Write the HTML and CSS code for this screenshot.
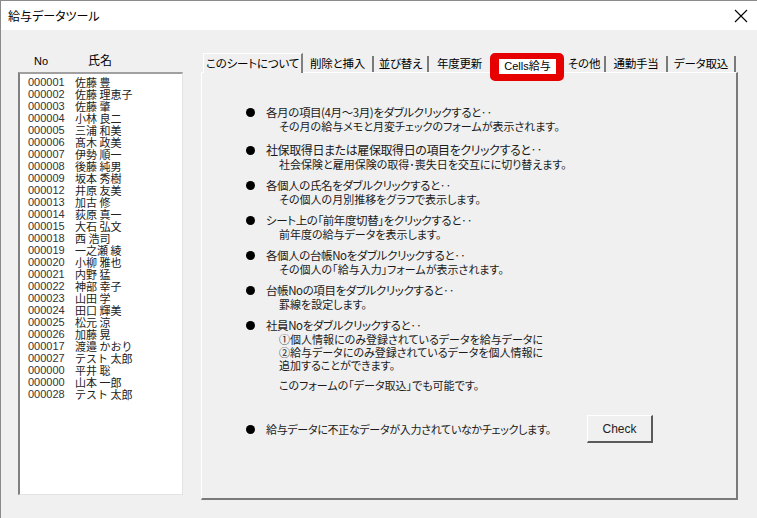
FILE: index.html
```html
<!DOCTYPE html>
<html lang="ja">
<head>
    <meta charset="UTF-8">
    <title>給与データツール</title>
    <link rel="stylesheet" href="styles.css">
</head>
<body>
<div id="window">
    <div class="titleBar">
        <span class="titleText">給与データツール</span>
        <svg class="closeIcon" width="14" height="14" viewBox="0 0 14 14">
            <path d="M1 1 L13 13 M13 1 L1 13" stroke="#000" stroke-width="1.1" fill="none"/>
        </svg>
    </div>

    <div class="mainArea">
        <div class="leftSide">
            <div class="listHead">
                <span class="colNo">No</span>
                <span class="colName">氏名</span>
            </div>
            <div class="listBox">
                <div class="row"><span class="num">000001</span><span class="name">佐藤 豊</span></div>
                <div class="row"><span class="num">000002</span><span class="name">佐藤 理恵子</span></div>
                <div class="row"><span class="num">000003</span><span class="name">佐藤 肇</span></div>
                <div class="row"><span class="num">000004</span><span class="name">小林 良二</span></div>
                <div class="row"><span class="num">000005</span><span class="name">三浦 和美</span></div>
                <div class="row"><span class="num">000006</span><span class="name">髙木 政美</span></div>
                <div class="row"><span class="num">000007</span><span class="name">伊勢 順一</span></div>
                <div class="row"><span class="num">000008</span><span class="name">後藤 純男</span></div>
                <div class="row"><span class="num">000009</span><span class="name">坂本 秀樹</span></div>
                <div class="row"><span class="num">000012</span><span class="name">井原 友美</span></div>
                <div class="row"><span class="num">000013</span><span class="name">加古 修</span></div>
                <div class="row"><span class="num">000014</span><span class="name">荻原 真一</span></div>
                <div class="row"><span class="num">000015</span><span class="name">大石 弘文</span></div>
                <div class="row"><span class="num">000018</span><span class="name">西 浩司</span></div>
                <div class="row"><span class="num">000019</span><span class="name">一之瀬 綾</span></div>
                <div class="row"><span class="num">000020</span><span class="name">小柳 雅也</span></div>
                <div class="row"><span class="num">000021</span><span class="name">内野 猛</span></div>
                <div class="row"><span class="num">000022</span><span class="name">神部 幸子</span></div>
                <div class="row"><span class="num">000023</span><span class="name">山田 学</span></div>
                <div class="row"><span class="num">000024</span><span class="name">田口 輝美</span></div>
                <div class="row"><span class="num">000025</span><span class="name">松元 涼</span></div>
                <div class="row"><span class="num">000026</span><span class="name">加藤 晃</span></div>
                <div class="row"><span class="num">000017</span><span class="name">渡邉 かおり</span></div>
                <div class="row"><span class="num">000027</span><span class="name">テスト 太郎</span></div>
                <div class="row"><span class="num">000000</span><span class="name">平井 聡</span></div>
                <div class="row"><span class="num">000000</span><span class="name">山本 一郎</span></div>
                <div class="row"><span class="num">000028</span><span class="name">テスト 太郎</span></div>
            </div>
        </div>

        <div class="rightSide">
            <div class="tabStrip">
                <div class="tab active">このシートについて</div>
                <div class="tab t2">削除と挿入</div>
                <div class="tab t3">並び替え</div>
                <div class="tab t4">年度更新</div>
                <div class="tab marked"><span class="markedLabel">Cells給与</span></div>
                <div class="tab t6">その他</div>
                <div class="tab t7">通勤手当</div>
                <div class="tab t8">データ取込</div>
            </div>
            <div class="panel">
                <div class="item">
                    <div class="head"><span class="dot"></span>各月の項目(4月～3月)をダブルクリックすると‥</div>
                    <div class="sub">その月の給与メモと月変チェックのフォームが表示されます。</div>
                </div>
                <div class="item big">
                    <div class="head"><span class="dot"></span>社保取得日または雇保取得日の項目をクリックすると‥</div>
                    <div class="sub">社会保険と雇用保険の取得･喪失日を交互にに切り替えます。</div>
                </div>
                <div class="item">
                    <div class="head"><span class="dot"></span>各個人の氏名をダブルクリックすると‥</div>
                    <div class="sub">その個人の月別推移をグラフで表示します。</div>
                </div>
                <div class="item">
                    <div class="head"><span class="dot"></span>シート上の「前年度切替」をクリックすると‥</div>
                    <div class="sub">前年度の給与データを表示します。</div>
                </div>
                <div class="item">
                    <div class="head"><span class="dot"></span>各個人の台帳Noをダブルクリックすると‥</div>
                    <div class="sub">その個人の「給与入力」フォームが表示されます。</div>
                </div>
                <div class="item">
                    <div class="head"><span class="dot"></span>台帳Noの項目をダブルクリックすると‥</div>
                    <div class="sub">罫線を設定します。</div>
                </div>
                <div class="item">
                    <div class="head"><span class="dot"></span>社員Noをダブルクリックすると‥</div>
                    <div class="sub">①個人情報にのみ登録されているデータを給与データに</div>
                    <div class="sub">②給与データにのみ登録されているデータを個人情報に</div>
                    <div class="sub">追加することができます。</div>
                    <div class="sub gapTop">このフォームの「データ取込」でも可能です。</div>
                </div>
                <div class="checkRow">
                    <div class="checkText"><span class="dot"></span>給与データに不正なデータが入力されていなかチェックします。</div>
                    <button class="checkBtn">Check</button>
                </div>
            </div>
        </div>
    </div>
</div>
</body>
</html>
```

FILE: styles.css
```css
body{
    margin: 0;
    background-color: #f0f0f0;
    font-family: "Noto Sans CJK JP", "Liberation Sans", sans-serif;
    color: #000;
}
#window{
    width: 756px;
    height: 517px;
    border-left: 1px solid #8a8a8a;
    border-top: 1px solid #8a8a8a;
    background-color: #f0f0f0;
    overflow: hidden;
}
.titleBar{
    height: 29px;
    background-color: #fff;
    display: flex;
    align-items: center;
    justify-content: space-between;
    padding: 0 8px 0 7px;
}
.titleText{
    font-size: 12px;
    font-feature-settings: "palt";
}
.closeIcon{
    margin-right: 1px;
}
.mainArea{
    display: flex;
    padding-top: 23px;
}
.leftSide{
    margin-left: 17px;
    width: 165px;
}
.listHead{
    height: 19px;
    font-size: 12px;
    display: flex;
}
.colNo{
    font-family: "Liberation Sans", sans-serif;
    font-size: 11px;
    margin-left: 16px;
    margin-top: 2px;
}
.colName{
    margin-left: 40px;
    line-height: 14px;
}
.listBox{
    background-color: #fff;
    border-left: 2px solid #808080;
    border-top: 2px solid #a0a0a0;
    border-right: 1px solid #e3e3e3;
    border-bottom: 1px solid #e3e3e3;
    padding: 2px 0 0 8px;
    box-sizing: border-box;
    height: 423px;
    color: #222;
}
.row{
    height: 12px;
    line-height: 12px;
    white-space: nowrap;
    display: flex;
    align-items: center;
}
.num{
    width: 47px;
    font-family: "Liberation Sans", sans-serif;
    font-size: 11px;
    color: #333;
}
.name{
    font-size: 11px;
}
.rightSide{
    margin-left: 18px;
    width: 537px;
}
.tabStrip{
    display: flex;
    align-items: flex-end;
    height: 19px;
    padding-left: 2px;
    font-size: 11.5px;
    font-feature-settings: "palt";
    letter-spacing: -0.2px;
}
.tab{
    height: 16px;
    line-height: 15px;
    text-align: center;
    box-sizing: border-box;
    border-right: 2px solid #7a7a7a;
    white-space: nowrap;
}
.tab.active{
    width: 100px;
    height: 20px;
    line-height: 19px;
    background-color: #f0f0f0;
    border-left: 1px solid #fff;
    border-top: 1px solid #fff;
    border-right: 2px solid #808080;
    margin-bottom: -1px;
    position: relative;
    z-index: 1;
}
.t2{ width: 71px; }
.t3{ width: 55px; }
.t4{ width: 61px; border-right: none; }
.t6{ width: 42px; }
.t7{ width: 62px; }
.t8{ width: 68px; }
.tab.marked{
    width: 74px;
    height: 28px;
    border: 5px solid #e60000;
    border-radius: 5px;
    background-color: #e60000;
    margin-bottom: -9px;
    padding: 0;
    position: relative;
    z-index: 2;
}
.markedLabel{
    display: block;
    background-color: #fff;
    margin: 1px 3px 0 4px;
    height: 15px;
    line-height: 15px;
    font-family: "Liberation Sans", "Noto Sans CJK JP", sans-serif;
    font-size: 11px;
    letter-spacing: 0;
}
.panel{
    height: 428px;
    box-sizing: border-box;
    border-left: 1px solid #fff;
    border-top: 1px solid #fff;
    border-right: 2px solid #7a7a7a;
    border-bottom: 2px solid #7a7a7a;
    padding: 31px 0 0 44px;
    color: #1a1a1a;
}
.item{
    margin-bottom: 6px;
    font-feature-settings: "palt";
}
.item.big{
    margin-top: 9px;
}
.head{
    font-size: 11.5px;
    line-height: 16px;
    letter-spacing: -0.4px;
    display: flex;
    align-items: center;
    white-space: nowrap;
}
.item.big .head{
    font-size: 12px;
}
.dot{
    display: inline-block;
    width: 9px;
    height: 9px;
    border-radius: 50%;
    background-color: #000;
    margin-right: 11px;
    flex-shrink: 0;
}
.sub{
    font-size: 11px;
    line-height: 13px;
    padding-left: 33px;
    white-space: nowrap;
}
.sub.gapTop{
    margin-top: 7px;
}
.checkRow{
    display: flex;
    align-items: center;
    margin-top: 23px;
}
.checkText{
    display: flex;
    align-items: center;
    font-size: 11px;
    letter-spacing: -0.3px;
    font-feature-settings: "palt";
    width: 341px;
    white-space: nowrap;
}
.checkBtn{
    width: 66px;
    height: 28px;
    background-color: #f0f0f0;
    border-left: 1px solid #fff;
    border-top: 1px solid #fff;
    border-right: 2px solid #5a5a5a;
    border-bottom: 2px solid #5a5a5a;
    font-family: "Liberation Sans", sans-serif;
    font-size: 12px;
    color: #222;
    padding: 0;
}
```
